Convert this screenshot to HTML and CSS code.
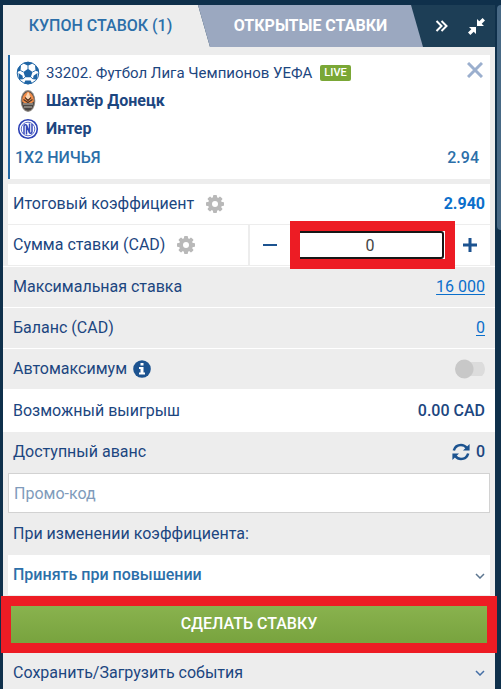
FILE: index.html
```html
<!DOCTYPE html>
<html lang="ru">
<head>
<meta charset="utf-8">
<meta name="viewport" content="width=device-width, initial-scale=1">
<title>Купон ставок</title>
<link rel="stylesheet" href="styles.css">
</head>
<body>
<svg class="defs" aria-hidden="true">
  <symbol id="gear" viewBox="0 0 18 18">
    <g fill="currentColor">
      <rect x="7" y="0" width="4" height="18" rx="1"/>
      <rect x="7" y="0" width="4" height="18" rx="1" transform="rotate(45 9 9)"/>
      <rect x="7" y="0" width="4" height="18" rx="1" transform="rotate(90 9 9)"/>
      <rect x="7" y="0" width="4" height="18" rx="1" transform="rotate(135 9 9)"/>
      <circle cx="9" cy="9" r="7"/>
    </g>
    <circle cx="9" cy="9" r="3" fill="#fff"/>
  </symbol>
  <symbol id="chevron" viewBox="0 0 10 6">
    <path d="M1 1l4 4 4-4" fill="none" stroke="currentColor" stroke-width="1.5"/>
  </symbol>
</svg>
<main class="coupon">
  <header class="tabs">
    <button class="tab tab-active" type="button">КУПОН СТАВОК (1)</button>
    <button class="tab tab-open" type="button">ОТКРЫТЫЕ СТАВКИ</button>
    <div class="tools">
      <button class="icon-button" type="button" aria-label="Скрыть">
        <svg width="13" height="12" viewBox="0 0 13 12"><path d="M1.500 1l5 5-5 5M6.500 1l5 5-5 5" fill="none" stroke="#fff" stroke-width="2"/></svg>
      </button>
      <button class="icon-button" type="button" aria-label="Свернуть">
        <svg width="17" height="17" viewBox="0 0 17 17"><g fill="#fff"><path d="M9 8V1l2.300 2.300L14.600 0 17 2.400l-3.300 3.300L16 8z"/><path d="M8 9v7l-2.300-2.300L2.400 17 0 14.600l3.300-3.300L1 9z"/></g></svg>
      </button>
    </div>
  </header>

  <article class="event">
    <button class="close" type="button" aria-label="Удалить">
      <svg width="16" height="16" viewBox="0 0 16 16"><path d="M1 1l14 14M15 1L1 15" stroke="#9bafce" stroke-width="3"/></svg>
    </button>
    <div class="event-line league">
      <svg class="mark" viewBox="0 0 24 24"><circle cx="12" cy="12" r="10.800" fill="#fff" stroke="#1f65a5" stroke-width="1"/><g fill="#1f65a5"><path d="M12 7.800l4.500 3.200-1.700 5.200H9.200L7.500 11z"/><path d="M7 2.300L12 4.800l5-2.500L12 .700zM.900 11l3.600-1.300L5 4.300 2 7zM23.100 11l-3.600-1.300L19 4.300 22 7zM3 18.500l4-.3-.5-3.500-4-2.700zM21 18.500l-4-.3.5-3.500 4-2.700zM8 22.500l1.300-3h5.400l1.300 3-4 1z"/></g><path d="M12 8V4.500M7.500 11L4.500 9.500M16.500 11l3-1.500M9.200 16L7 18M14.800 16l2.200 2" stroke="#1f65a5" stroke-width=".9" fill="none"/></svg>
      <span>33202. Футбол Лига Чемпионов УЕФА</span>
      <span class="live">LIVE</span>
    </div>
    <div class="event-line team">
      <svg class="mark" viewBox="0 0 24 24"><ellipse cx="12" cy="12" rx="7.300" ry="11" fill="#8b8680"/><ellipse cx="12" cy="12" rx="6.200" ry="9.800" fill="#4a4541"/><path d="M6.200 12.500C5.700 7.500 8.500 4 12 2.500c3.500 1.500 6.300 5 5.800 10l-2 1.500H8.200z" fill="#f28d49"/><path d="M12 3c1.700 2 1.300 3 2.500 5l-1 2h-3l-1-2C10.700 6 11 5 12 3z" fill="#fbd7b4"/><path d="M7.500 10.500l4.500 3 4.500-3M9 8.500l3 3 3-3" fill="none" stroke="#4a3425" stroke-width="1.100"/><path d="M7 15h10M8 18h8" stroke="#c2bdb4" stroke-width="1"/></svg>
      <span>Шахтёр Донецк</span>
    </div>
    <div class="event-line team">
      <svg class="mark" viewBox="0 0 24 24"><circle cx="12" cy="12" r="9.300" fill="#fff" stroke="#2c41b5" stroke-width="1.600"/><circle cx="12" cy="12" r="6.800" fill="#fff" stroke="#5a6bcb" stroke-width="1"/><path d="M8 17V9.500M16 7v7.500M10.500 17.500V8l3 8V6.500M8 9.500c0-1.500 1-2 2.500-1.500M16 14.500c0 1.500-1 2-2.500 1.500" stroke="#3448ba" stroke-width="1.500" fill="none"/></svg>
      <span>Интер</span>
    </div>
    <div class="pick"><span>1X2 НИЧЬЯ</span><span>2.94</span></div>
  </article>

  <section class="box">
    <div class="row white">
      <span>Итоговый коэффициент</span>
      <svg class="gear"><use href="#gear"/></svg>
      <strong class="value odds">2.940</strong>
    </div>
    <div class="row white">
      <label for="stake">Сумма ставки (CAD)</label>
      <svg class="gear"><use href="#gear"/></svg>
      <div class="stepper">
        <button class="step" type="button" aria-label="Меньше"><svg width="14" height="14"><path d="M0 7h14" stroke="#1c5390" stroke-width="2"/></svg></button>
        <div class="stake-field"><input id="stake" class="stake" type="text" inputmode="numeric" value="0"></div>
        <button class="step" type="button" aria-label="Больше"><svg width="14" height="14"><path d="M0 7h14M7 0v14" stroke="#1c5390" stroke-width="3"/></svg></button>
      </div>
    </div>
  </section>

  <div class="row line"><span>Максимальная ставка</span><a class="value" href="#">16 000</a></div>
  <div class="row line"><span>Баланс (CAD)</span><a class="value" href="#">0</a></div>
  <div class="row line">
    <label for="auto">Автомаксимум</label>
    <svg class="info" viewBox="0 0 18 18"><circle cx="9" cy="9" r="8.800" fill="#1c5390"/><path d="M7.500 3h3v2.500h-3zM6 7h4.500v5.500H12V14.500H6v-2h1.500V9H6z" fill="#fff"/></svg>
    <input id="auto" class="switch" type="checkbox" role="switch">
  </div>
  <div class="row win"><span>Возможный выигрыш</span><span class="value">0.00 CAD</span></div>
  <div class="row advance-row">
    <span>Доступный аванс</span>
    <span class="value advance">
      <svg width="18" height="18" viewBox="0 0 18 18"><g fill="none" stroke="#1c5390" stroke-width="2.600"><path d="M1.800 7.500C3 3.500 5.800 2 9 2c2.300 0 4.300 1 5.800 3"/><path d="M16.200 10.500C15 14.500 12.200 16 9 16c-2.300 0-4.300-1-5.800-3"/></g><path d="M17.600 1v6.600H11zM.4 17v-6.600H7z" fill="#1c5390"/></svg>
      <span>0</span>
    </span>
  </div>

  <input class="promo" type="text" placeholder="Промо-код" aria-label="Промо-код">

  <div class="row"><label for="change">При изменении коэффициента:</label></div>
  <div class="select-box">
    <select id="change" class="select"><option>Принять при повышении</option></select>
    <svg class="chevron"><use href="#chevron"/></svg>
  </div>

  <div class="submit-frame"><button class="submit" type="button">СДЕЛАТЬ СТАВКУ</button></div>

  <button class="row saved" type="button"><span>Сохранить/Загрузить события</span><svg class="saved-chevron"><use href="#chevron"/></svg></button>
</main>
<div class="scroll" aria-hidden="true"></div>
</body>
</html>
```
FILE: styles.css
```css
* { box-sizing: border-box; }
body {
  margin: 0;
  min-height: 100vh;
  padding: 5px 0 0 3px;
  display: flex;
  gap: 2px;
  overflow: hidden;
  background: #0f304b;
  color: #1c4680;
  font: 16px/20px Roboto, sans-serif;
}
button, input, select { font: inherit; color: inherit; border: 0; margin: 0; padding: 0; background: none; }
.defs { position: absolute; width: 0; height: 0; }
.coupon { flex: 1; min-width: 0; background: #ededed; }
.scroll { width: 4px; height: 225px; background: #486985; border-radius: 4px 0 0 4px; }

.tabs { display: flex; height: 42px; background: #1d3e56; }
.tab-active { flex: 0 0 207px; padding-right: 12px; color: #2c6fa9; font-weight: 500; background: #ededed; clip-path: polygon(0 0, 195px 0, 100% 100%, 0 100%); }
.tab-open { flex: 1; margin-left: -12px; color: #fff; font-weight: 700; background: #9ba8c0; clip-path: polygon(0 0, calc(100% - 12px) 0, 100% 100%, 12px 100%); }
.tools { flex: 0 0 72px; display: flex; align-items: center; justify-content: space-between; padding: 0 10px 0 12px; }
.icon-button { display: flex; }

.event { position: relative; margin: 8px 5px 5px; padding: 4px 11px 6px 5px; height: 124px; background: #fff; border-left: 2px solid #2268a5; }
.close { position: absolute; top: 7px; right: 7px; display: flex; }
.event-line { display: flex; align-items: center; height: 28px; gap: 6px; }
.league { font-size: 15px; }
.team { font-weight: 700; }
.mark { width: 24px; height: 24px; margin-left: 1px; }
.live { margin-left: 2px; padding: 0 4px; border-radius: 2px; background: #7aa736; color: #fff; font-size: 11px; font-weight: 500; line-height: 16px; }
.pick { display: flex; justify-content: space-between; height: 30px; align-items: center; color: #2c6fa9; font-weight: 500; }

.box { margin: 0 5px; }
.row { display: flex; align-items: center; width: 100%; height: 41px; padding: 0 10px; }
.white { background: #fff; padding: 0 5px; border-bottom: 1px solid #ededed; }
.white + .white { padding-right: 0; }
.value { margin-left: auto; font-weight: 500; }
.odds, a.value { color: #0b6fcb; }
.odds { font-weight: 700; }
a.value { font-weight: 400; text-underline-offset: 2px; }
.gear { width: 18px; height: 18px; margin-left: 12px; color: #b9b9b9; }
.stepper { display: grid; grid-template-columns: 40px 160px 40px; height: 40px; margin-left: auto; border-left: 2px solid #ededed; box-sizing: content-box; }
.step { display: grid; place-items: center; }
.stake-field { position: relative; padding: 6px 6px 6px 0; }
.stake-field::after { content: ""; position: absolute; inset: -4px -5px; left: 0; border: 10px solid #ed1c24; pointer-events: none; }
.stake { display: block; width: 100%; height: 28px; padding-left: 6px; border: 2px solid #161616; border-radius: 3px; text-align: center; color: #444; background: #fff; outline: 0; }

.line { border-top: 1px solid #fff; }
.info { width: 18px; height: 18px; margin-left: 6px; }
.switch { appearance: none; width: 30px; height: 20px; margin-left: auto; border-radius: 10px; background: radial-gradient(circle at 9px 10px, #c8c8c8 9px, transparent 10px), linear-gradient(#dcdcdc, #dcdcdc) 6px 3px / 100% 14px no-repeat; }
.win { height: 43px; background: #fff; }
.advance-row { padding-bottom: 2px; }
.advance { display: flex; align-items: center; gap: 6px; }
.promo { display: block; width: calc(100% - 10px); height: 40px; margin: 0 5px; padding: 0 5px; border: 1px solid #d2d2d2; background: #fff; }
.promo::placeholder { color: #809bbb; opacity: 1; }
.select-box { position: relative; margin: 1px 5px; }
.select { appearance: none; display: block; width: 100%; height: 40px; padding: 0 5px; background: #fff; color: #2c6fa9; font-weight: 500; }
.chevron { position: absolute; right: 5px; top: 18px; width: 10px; height: 6px; color: #5d7690; pointer-events: none; }
.submit-frame { position: relative; margin: 0 -2px; padding: 10px; background: #ed1c24; }
.submit { display: block; width: 100%; height: 37px; padding-bottom: 2px; color: #fff; font-weight: 500; background: linear-gradient(#89b24e, #78a33e); }
.saved { height: 40px; text-align: left; }
.saved-chevron { width: 10px; height: 6px; margin-left: auto; color: #456fa6; }
```
